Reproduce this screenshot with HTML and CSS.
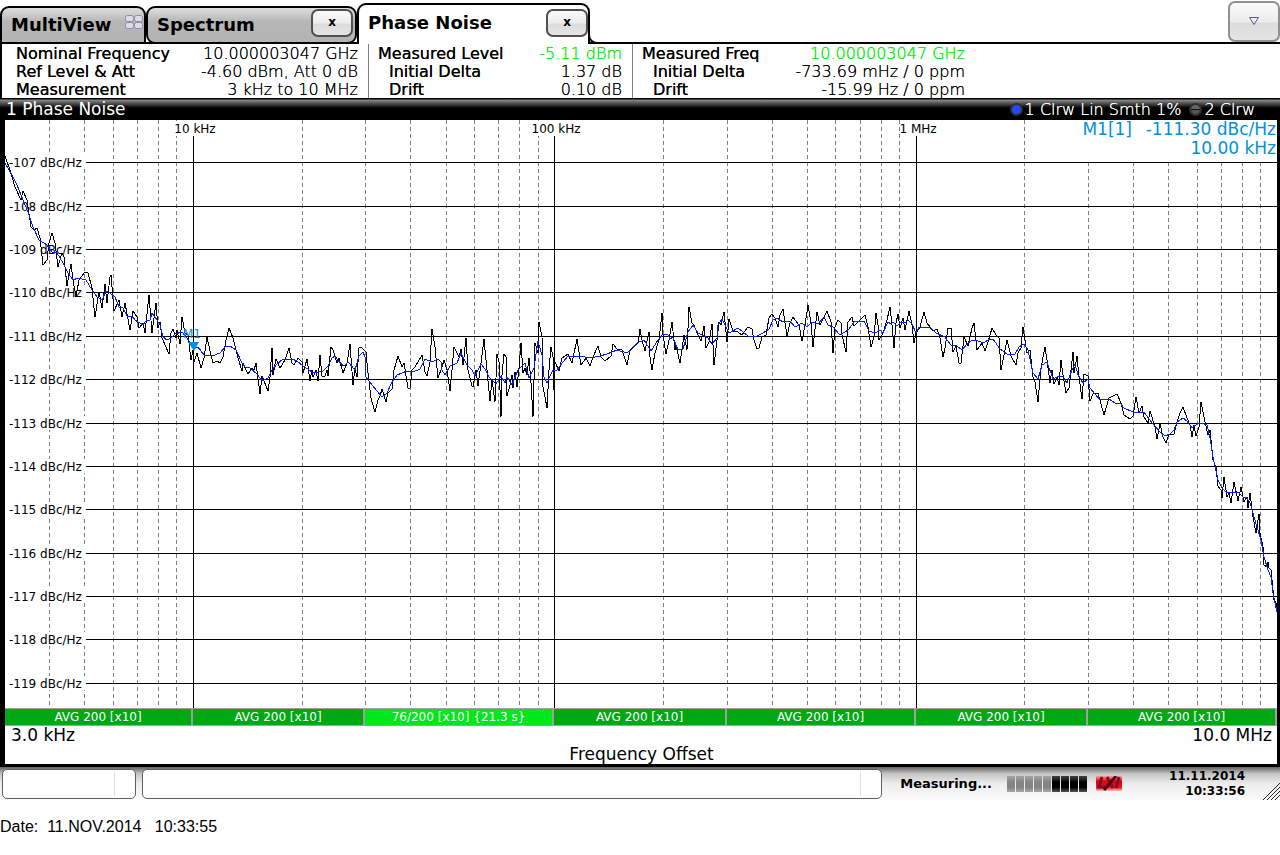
FILE: index.html
```html
<!DOCTYPE html>
<html lang="en">
<head>
    <meta charset="UTF-8">
    <meta name="viewport" content="width=device-width, initial-scale=1.0">
    <title>Phase Noise</title>
    <link rel="stylesheet" href="styles.css">
</head>
<body>
    <div class="analyzer">
        <nav class="tabs">
            <button class="tab multiview">MultiView
                <svg class="multi-icon" viewBox="0 0 18 16" width="18" height="16">
                    <g fill="#dcdce6" stroke="#8c8ca4" stroke-width="1">
                        <rect x="0.5" y="0.5" width="8" height="6" rx="2"/>
                        <rect x="9.5" y="0.5" width="8" height="6" rx="2"/>
                        <rect x="0.5" y="7.5" width="8" height="6" rx="2"/>
                        <rect x="9.5" y="7.5" width="8" height="6" rx="2"/>
                    </g>
                </svg>
            </button>
            <div class="tab spectrum"><span>Spectrum</span><button class="close">x</button></div>
            <div class="tab active"><span>Phase Noise</span><button class="close">x</button></div>
            <button class="tab-menu" aria-label="Tabs">
                <svg viewBox="0 0 12 10" width="12" height="10"><path d="M1.5 1.5h9L6 8.5z" fill="none" stroke="#5a5a82"/></svg>
            </button>
        </nav>

        <section class="info">
            <dl class="info-group">
                <dt>Nominal Frequency</dt><dd>10.000003047 GHz</dd>
                <dt>Ref Level &amp; Att</dt><dd>-4.60 dBm, Att 0 dB</dd>
                <dt>Measurement</dt><dd>3 kHz to 10 MHz</dd>
            </dl>
            <dl class="info-group level">
                <dt>Measured Level</dt><dd class="green">-5.11 dBm</dd>
                <dt class="sub">Initial Delta</dt><dd>1.37 dB</dd>
                <dt class="sub">Drift</dt><dd>0.10 dB</dd>
            </dl>
            <dl class="info-group freq">
                <dt>Measured Freq</dt><dd class="green">10.000003047 GHz</dd>
                <dt class="sub">Initial Delta</dt><dd>-733.69 mHz / 0 ppm</dd>
                <dt class="sub">Drift</dt><dd>-15.99 Hz / 0 ppm</dd>
            </dl>
        </section>

        <main class="window">
            <header class="title-bar">
                <span>1 Phase Noise</span>
                <span class="traces">
                    <i class="led on"></i><span>1 Clrw Lin Smth 1%</span>
                    <i class="led"></i><span>2 Clrw</span>
                </span>
            </header>

            <svg class="chart" viewBox="5 120 1272 588">
                <!-- minor grid -->
                <path class="minor" d="M49.5 120V708M84.5 120V708M113.5 120V708M137.5 120V708M158.5 120V708M176.5 120V708M302.5 120V708M365.5 120V708M410.5 120V708M446.5 120V708M474.5 120V708M498.5 120V708M519.5 120V708M538.5 120V708M663.5 120V708M727.5 120V708M772.5 120V708M807.5 120V708M835.5 120V708M860.5 120V708M881.5 120V708M899.5 120V708M1024.5 120V708M1088.5 120V708M1133.5 120V708M1168.5 120V708M1197.5 120V708M1221.5 120V708M1242.5 120V708M1260.5 120V708"/>
                <rect class="blank" x="1080" y="120" width="197" height="41"/>
                <rect class="blank" x="172" y="121" width="45" height="15"/>
                <rect class="blank" x="529" y="121" width="53" height="15"/>
                <!-- major grid -->
                <path class="major" d="M193.5 136V708M554.5 136V708M916.5 136V708"/>
                <path class="major" d="M86 162.5H1277M86 206.5H1277M86 249.5H1277M86 292.5H1277M86 336.5H1277M86 379.5H1277M86 423.5H1277M86 466.5H1277M86 509.5H1277M86 553.5H1277M86 596.5H1277M86 639.5H1277M86 683.5H1277"/>
                <g class="axis-labels" id="level-labels"></g>
                <g class="axis-labels" text-anchor="middle">
                    <text x="195" y="133">10 kHz</text>
                    <text x="556" y="133">100 kHz</text>
                    <text x="918" y="133">1 MHz</text>
                </g>
                <polyline class="trace raw" points="5,156 10,170 15,187 21,200 23,191 27,200 31,227 34,230 37,228 40,238 43,265 47,260 49,243 52,233 55,243 58,267 62,253 64,257 67,286 71,264 73,280 76,297 79,280 85,272 88,273 92,288 95,317 99,292 102,308 105,284 107,303 110,277 111,275 114,311 119,300 122,317 125,303 130,330 133,311 137,317 139,328 143,323 145,333 149,295 152,333 156,303 158,328 160,322 162,338 169,354 171,333 173,329 176,338 177,330 180,344 182,317 185,333 188,335 191,360 193,350
                    194,362 197,353 201,368 204,358 207,337 211,355 213,363 217,361 220,363 223,357 226,340 229,328 233,338 238,358 242,371 243,363 248,374 252,368 254,370 256,363 260,394 262,376 268,391 270,377 272,348 273,375 276,359 280,368 285,360 289,348 292,363 294,365 298,358 302,362 303,373 307,359 310,381 312,370 313,377 316,370 318,381 320,355 322,376 325,376 327,370 328,376 331,347 333,350 337,363 339,358 343,373 347,363 350,344 353,385 355,368 357,377 359,348 361,347 366,352 368,373 371,398 375,412 378,400 380,396 382,389 386,402 388,393 392,389 394,370 398,356 402,367 404,363 408,388 410,388 412,370 415,367 422,355 425,372
                    427,376 430,362 432,329 435,347 438,378 442,367 444,360 447,370 450,391 452,370 454,347 457,353 459,357 461,349 463,365 464,357 466,338 468,370 472,386 473,387 476,370 478,386 481,363 484,339 487,370 490,401 492,380 495,402 497,354 499,362 501,417 502,375 504,354 506,357 507,396 510,385 512,375 513,388 515,372 517,387 519,368 521,343 523,373 525,368 527,375 529,358 531,383 533,417 535,343 538,353 539,322 542,337 543,387 545,397 547,408 549,370 551,347 553,357 554,390 555,362
                    559,371 562,358 568,354 572,363 577,339 581,365 586,358 590,366 593,357 598,346 601,357 605,361 611,356 613,344 617,349 622,350 627,365 630,350 633,347 638,343 640,329 642,340 645,351 649,332 650,357 652,370 655,353 659,340 662,313 663,335 666,354 669,340 672,322 675,350 676,345 680,363 684,335 687,350 689,307 692,323 694,325 697,333 701,341 704,326 706,348 709,342 712,324 714,365 717,340 719,322 721,325 724,312 727,342 729,319
                    733,331 737,331 739,333 742,335 748,327 752,329 754,340 757,349 759,348 762,337 766,335 769,318 772,314 775,318 778,327 780,315 783,309 787,336 790,323 793,317 799,325 802,341 805,325 808,305 811,323 813,347 817,312 820,325 827,311 831,322 833,353 835,327 838,320 841,323 842,335 846,352 848,322 852,317 854,326 858,322 865,315 868,327 871,347 874,337 876,313 878,325 879,340 883,333 887,320 890,307 892,325 894,348 896,323 898,314 900,328 903,318 905,330 909,311 912,325 914,343 916,333
                    920,327 924,312 927,323 933,331 937,329 940,338 943,357 945,348 948,328 951,328 953,352 956,346 959,363 961,363 964,337 968,346 972,328 974,323 977,350 982,343 985,351 988,342 992,328 996,335 999,338 1001,370 1004,355 1007,340 1011,356 1016,365 1018,353 1021,348 1023,327 1027,353 1030,350 1033,377 1035,382 1038,402 1041,368 1045,347 1047,360 1050,383 1052,370 1054,384 1057,377 1059,385 1061,360 1063,375 1066,393 1069,388 1073,352 1074,373 1077,356 1079,377 1082,399 1084,374 1088,376 1090,401
                    1093,394 1098,393 1104,415 1109,398 1117,394 1121,403 1124,415 1130,419 1133,416 1136,397 1139,413 1142,406 1144,417 1148,423 1150,411 1155,427 1157,439 1160,424 1163,437 1166,443 1169,434 1174,434 1177,422 1180,413 1183,407 1187,418 1190,425 1192,437 1194,425 1196,436 1199,427 1201,402 1205,422 1208,435 1210,430 1213,460 1216,467 1218,486 1221,490 1222,498 1224,477 1227,497 1229,493 1231,503 1234,482 1238,501 1241,487 1244,502 1247,497 1248,508 1250,493 1253,517 1256,533 1259,514 1260,533 1263,547 1264,565 1267,567 1268,562 1269,568 1271,570 1273,590 1274,600 1276,603 1277,612"/>
                <polyline class="trace smooth" points="5,163 12,175 17,185 23,200 28,212 33,227 39,240 47,245 52,252 57,253 63,263 68,273 73,280 78,278 86,280 92,290 97,297 102,300 106,291 110,293 115,297 119,307 123,308 127,316 132,316 135,320 143,325 146,321 150,320 152,313 157,320 160,325 163,337 167,340 171,338 175,334 182,332 187,338 193,347
                    198,347 204,355 212,356 220,353 225,347 230,346 236,350 242,363 245,367 250,368 257,374 262,381 268,378 272,370 277,364 283,359 292,359 297,361 303,366 308,369 313,373 323,371 328,366 332,358 335,356 340,363 344,366 348,362 355,370 357,363 359,356 363,352 365,357 366,377 372,385 382,397 387,393 392,382 397,375 407,371 413,372 420,369 425,359
                    432,362 438,359 441,362 442,370 445,375 450,366 457,363 461,353 467,365 472,370 475,376 481,364 485,369 489,377 496,384 501,376 505,383 507,377 512,385 518,370 525,363 529,378 534,368 538,341 542,355 544,377 547,383 550,376 553,370 556,371 563,362 568,356 577,356 585,357 590,358 600,356 607,354 617,350 627,353 632,349 637,343
                    644,340 651,351 658,340 663,334 668,335 670,339 673,337 678,350 683,349 688,332 693,325 698,333 708,338 712,344 717,338 718,325 722,319 725,325 729,333 738,328 743,332 748,336 757,336 763,333 769,329 773,320 777,318 783,322 790,321 795,327 802,323 807,327 812,322 818,324 824,317 828,325 833,327
                    840,335 848,330 855,321 864,321 869,331 875,333 880,330 883,333 888,322 891,324 893,322 897,326 901,322 905,323 908,320 912,324 916,333 919,327 930,327 936,333 945,337 951,345 957,346 962,350 967,344 972,340 978,341 984,343 989,339 993,339 1000,349 1007,354 1015,354 1019,347 1024,344
                    1028,350 1033,373 1038,379 1042,365 1047,362 1053,379 1059,376 1063,377 1067,383 1072,370 1075,364 1078,375 1083,383 1088,379 1090,388 1100,400 1109,399 1115,403 1121,404 1124,408 1135,413 1144,412 1153,424 1160,432 1165,436 1170,434 1174,430 1177,422 1183,418 1187,421 1192,428 1197,424 1202,423 1207,425 1210,438 1213,457 1218,480 1222,488 1227,493 1231,492 1235,493 1238,492 1243,497 1247,498 1250,503 1253,513 1257,527 1261,540 1264,557 1268,570 1271,577 1273,593 1275,603 1277,612"/>
                <!-- marker -->
                <g class="marker">
                    <path d="M188 342h11l-5 9z"/>
                    <text x="183" y="338">M1</text>
                </g>
                <g class="readout" text-anchor="end">
                    <text x="1132" y="135">M1[1]</text>
                    <text x="1276" y="135">-111.30 dBc/Hz</text>
                    <text x="1276" y="154">10.00 kHz</text>
                </g>
            </svg>

            <div class="averages">
                <span>AVG 200 [x10]</span>
                <span>AVG 200 [x10]</span>
                <span class="running">76/200 [x10] {21.3 s}</span>
                <span>AVG 200 [x10]</span>
                <span>AVG 200 [x10]</span>
                <span>AVG 200 [x10]</span>
                <span>AVG 200 [x10]</span>
            </div>
            <footer class="range">
                <div class="range-ends"><span>3.0 kHz</span><span>10.0 MHz</span></div>
                <div class="range-title">Frequency Offset</div>
            </footer>
        </main>

        <div class="status-bar">
            <div class="box small"></div>
            <div class="box"></div>
            <span class="state">Measuring...</span>
            <div class="progress">
                <i></i><i></i><i></i><i></i><i></i><i class="full"></i><i class="full"></i><i class="full"></i><i class="full"></i>
            </div>
            <svg class="lxi" viewBox="0 0 26 16" width="26" height="16">
                <defs>
                    <linearGradient id="lxi-red" x2="0" y2="1">
                        <stop offset="0" stop-color="#f9a0a0"/>
                        <stop offset="0.35" stop-color="#e80000"/>
                        <stop offset="0.75" stop-color="#f01010"/>
                        <stop offset="1" stop-color="#f9c0c0"/>
                    </linearGradient>
                </defs>
                <rect width="26" height="15" rx="1" fill="url(#lxi-red)"/>
                <g fill="none" stroke="#7a1030" stroke-width="3">
                    <path d="M6 1L3 11h6M11 1l6 11M23 1l-3 11"/>
                    <path d="M20 0L8 14" stroke="#50081c"/>
                </g>
            </svg>
            <div class="clock">11.11.2014<br>10:33:56</div>
            <svg class="grip" viewBox="0 0 18 18" width="18" height="18"><path d="M1 18L18 1M5 18L18 5M9 18L18 9M13 18l5-5" stroke="#222" fill="none"/></svg>
        </div>
    </div>
    <p class="date">Date: &nbsp;11.NOV.2014 &nbsp; 10:33:55</p>

    <script>
        const levels = document.getElementById('level-labels');
        const lines = [162, 206, 249, 292, 336, 379, 423, 466, 509, 553, 596, 639, 683];

        lines.forEach((y, i) => {
            levels.innerHTML += `<rect class="blank" x="9" y="${y - 7}" width="77" height="14"/>
                <text x="9" y="${y + 5}">-${107 + i} dBc/Hz</text>`;
        });
    </script>
</body>
</html>
```
FILE: styles.css
```css
* {
    box-sizing: border-box;
}

body {
    margin: 0;
    background: #fff;
    color: #000;
    font-family: "DejaVu Sans", Verdana, sans-serif;
}

button {
    font-family: inherit;
    color: inherit;
}

.tabs {
    display: flex;
    align-items: flex-end;
    height: 44px;
    border-bottom: 2px solid #000;
}

.tab {
    display: flex;
    align-items: center;
    justify-content: space-between;
    height: 38px;
    margin-bottom: -2px;
    padding: 0 2px 2px 9px;
    border: 2px solid #000;
    border-radius: 9px 9px 0 0;
    background: linear-gradient(#dedede, #b6b6b6 40%, #b4b4b4);
    font-size: 18px;
    font-weight: bold;
}

.multiview {
    width: 146px;
    padding-right: 1px;
}

.multi-icon {
    margin-bottom: 2px;
}

.spectrum {
    width: 211px;
    border-radius: 9px;
}

.active {
    position: relative;
    width: 233px;
    height: 41px;
    padding: 0 0 4px 9px;
    border-bottom: 0;
    border-radius: 9px 9px 0 0;
    background: #fff;
}

/* foot of the active tab */
.active::after {
    content: "";
    position: absolute;
    left: 100%;
    bottom: 0;
    width: 9px;
    height: 9px;
    border: solid #000;
    border-width: 0 0 2px 2px;
    border-bottom-left-radius: 9px;
    background: #fff;
}

.close,
.tab-menu {
    border: 2px solid #505050;
    border-radius: 7px;
    background: linear-gradient(#fafafa, #ececec 50%, #dcdcdc 55%, #e4e4e4);
}

.close {
    width: 42px;
    height: 28px;
    padding: 0 0 2px;
    font-size: 12px;
    font-weight: bold;
}

.spectrum .close {
    margin-bottom: 2px;
}

.tab-menu {
    width: 52px;
    height: 41px;
    margin-left: auto;
    border-color: #909090;
}

.info {
    display: flex;
    height: 54px;
    border-left: 2px solid #000;
}

.info-group {
    display: grid;
    grid-template-columns: auto auto;
    justify-content: space-between;
    grid-auto-rows: 18px;
    width: 367px;
    margin: 0;
    padding: 1px 10px 0 14px;
    border-right: 1px solid #808080;
    font-size: 16px;
    line-height: 18px;
    text-shadow: 0 0 0 currentColor;
}

.info-group dd {
    margin: 0;
    text-align: right;
    font-weight: 200;
}

.level {
    width: 264px;
    padding-left: 9px;
}

.freq {
    width: 342px;
    padding-left: 9px;
    border-right: 0;
}

.info-group .sub {
    padding-left: 11px;
}

.info-group .green {
    color: #00f000;
}

.window {
    border: solid #000;
    border-width: 0 3px 3px 5px;
}

.title-bar {
    display: flex;
    justify-content: space-between;
    height: 22px;
    margin: 0 -3px 0 -5px;
    padding: 0 25px 0 6px;
    background: linear-gradient(#000 1px, #8a8a8a 2px, #000 10px);
    color: #fff;
    font-size: 17px;
    line-height: 23px;
}

.traces {
    display: flex;
    align-items: center;
    gap: 2px;
    font-size: 16px;
    font-weight: 200;
    text-shadow: 0 0 0 currentColor;
}

.led {
    width: 13px;
    height: 13px;
    margin-left: 6px;
    border: 2px solid #303030;
    border-radius: 50%;
    background: linear-gradient(#666 40%, #111 45%, #111 55%, #555 60%);
}

.led.on {
    background: #2848ff;
}

.chart {
    display: block;
    width: 100%;
    height: auto;
}

.minor {
    fill: none;
    stroke: #808080;
    stroke-dasharray: 4 3;
    shape-rendering: crispEdges;
}

.major {
    fill: none;
    stroke: #000;
    shape-rendering: crispEdges;
}

.blank {
    fill: #fff;
}

.axis-labels {
    font-size: 12px;
}

.trace {
    fill: none;
    stroke: #000;
    shape-rendering: crispEdges;
}

.smooth {
    stroke: #0020ff;
}

.marker {
    fill: #0090e0;
    font-size: 12px;
}

.readout {
    fill: #0090e0;
    font-size: 17px;
}

.averages {
    display: grid;
    grid-template-columns: 188fr 172fr 189fr 173fr 189fr 172fr 189fr;
    border: solid #a0a0a0;
    border-width: 1px 0;
    background: #00a814;
    color: #fff;
    font-size: 12px;
    line-height: 16px;
    text-align: center;
}

.averages span {
    border-right: 2px solid #a0a0a0;
}

.averages .running {
    background: #00e81c;
}

.range {
    padding: 0 5px 0 6px;
    font-size: 17px;
    line-height: 19px;
}

.range-ends {
    display: flex;
    justify-content: space-between;
}

.range-title {
    text-align: center;
}

.status-bar {
    display: flex;
    align-items: center;
    height: 33px;
    padding-left: 2px;
    background: linear-gradient(#606060, #c4c4c4 20%, #ececec 50%, #fbfbfb);
    font-size: 13px;
    font-weight: bold;
}

.box {
    flex: 1;
    height: 30px;
    margin-right: 18px;
    border: 1px solid #606060;
    border-radius: 5px;
    background: linear-gradient(#e0e0e0, #e0e0e0) right 20px center / 1px 24px no-repeat #fff;
}

.small {
    flex: 0 0 134px;
    margin-right: 6px;
}

.progress {
    display: flex;
    gap: 1px;
    margin: 0 9px 0 15px;
}

.progress i {
    width: 8px;
    height: 16px;
    background: linear-gradient(#a4a4a4, #848484 40%, #848484 70%, #a8a8a8);
}

.progress .full {
    background: linear-gradient(#444, #000 40%, #000 70%, #555);
}

.clock {
    width: 123px;
    text-align: right;
    font-size: 12px;
    line-height: 15px;
}

.grip {
    align-self: flex-end;
    margin-left: 17px;
}

.date {
    margin: 18px 0 0;
    font-family: "Liberation Sans", Arial, sans-serif;
    font-size: 16px;
    line-height: 18px;
}
```
